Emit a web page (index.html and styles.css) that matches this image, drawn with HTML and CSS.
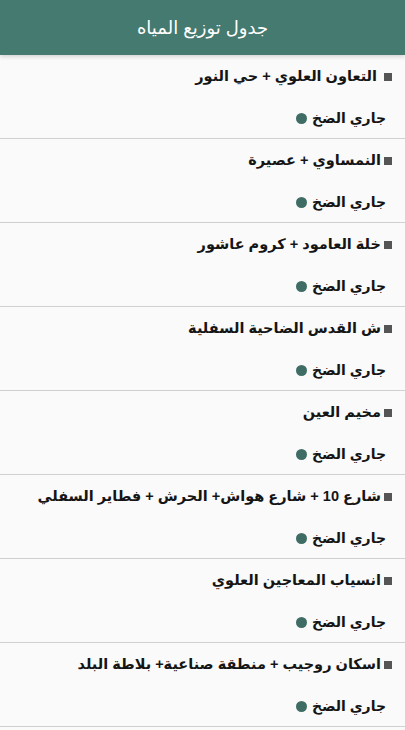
FILE: index.html
```html
<!DOCTYPE html>
<html lang="ar" dir="rtl">
<head>
    <meta charset="UTF-8">
    <title>جدول توزيع المياه</title>
    <link rel="stylesheet" href="styles.css">
</head>
<body>
    <div class="toolbar">جدول توزيع المياه</div>

    <div class="list">
        <div class="item">
            <div class="area"><span class="bullet"></span> التعاون العلوي + حي النور</div>
            <div class="status">جاري الضخ<span class="dot"></span></div>
        </div>
        <div class="item">
            <div class="area"><span class="bullet"></span>النمساوي + عصيرة</div>
            <div class="status">جاري الضخ<span class="dot"></span></div>
        </div>
        <div class="item">
            <div class="area"><span class="bullet"></span>خلة العامود + كروم عاشور</div>
            <div class="status">جاري الضخ<span class="dot"></span></div>
        </div>
        <div class="item">
            <div class="area"><span class="bullet"></span>ش القدس الضاحية السفلية</div>
            <div class="status">جاري الضخ<span class="dot"></span></div>
        </div>
        <div class="item">
            <div class="area"><span class="bullet"></span>مخيم العين</div>
            <div class="status">جاري الضخ<span class="dot"></span></div>
        </div>
        <div class="item">
            <div class="area"><span class="bullet"></span>شارع 10 + شارع هواش+ الحرش + فطاير السفلي</div>
            <div class="status">جاري الضخ<span class="dot"></span></div>
        </div>
        <div class="item">
            <div class="area"><span class="bullet"></span>انسياب المعاجين العلوي</div>
            <div class="status">جاري الضخ<span class="dot"></span></div>
        </div>
        <div class="item">
            <div class="area"><span class="bullet"></span>اسكان روجيب + منطقة صناعية+ بلاطة البلد</div>
            <div class="status">جاري الضخ<span class="dot"></span></div>
        </div>
    </div>
</body>
</html>
```

FILE: styles.css
```css
body {
    margin: 0;
    font-family: "Liberation Sans", "DejaVu Sans", sans-serif;
    background-color: #fafafa;
    color: #151515;
}
.toolbar {
    height: 55px;
    background-color: #457a70;
    color: white;
    font-size: 18px;
    display: flex;
    align-items: center;
    justify-content: center;
    box-shadow: 0 2px 4px rgba(0,0,0,0.15);
    position: relative;
}
.item {
    height: 83px;
    border-bottom: 1.5px solid #d0d0d0;
    padding: 0 13px 0 6px;
}
.area {
    font-size: 14.5px;
    font-weight: bold;
    padding-top: 10px;
    line-height: 22px;
    white-space: nowrap;
}
.bullet {
    display: inline-block;
    width: 8px;
    height: 8px;
    background: #555;
    margin-left: 3px;
}
.status {
    font-size: 14px;
    font-weight: bold;
    margin-top: 20px;
    margin-right: 6px;
    line-height: 22px;
}
.dot {
    display: inline-block;
    width: 11px;
    height: 11px;
    border-radius: 50%;
    background: #3f6d65;
    margin-right: 5px;
    vertical-align: -1px;
}
```
